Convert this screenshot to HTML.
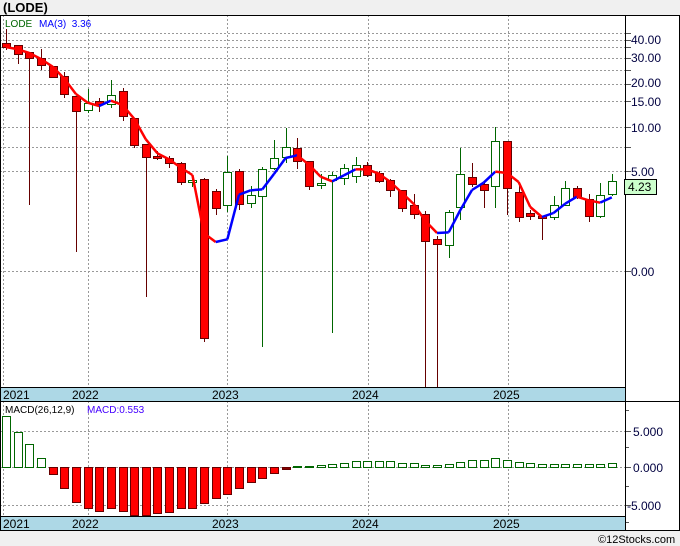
<!DOCTYPE html>
<html><head><meta charset="utf-8"><style>
body{margin:0;width:680px;height:546px;background:#f0f0f0;overflow:hidden;font-family:"Liberation Sans",sans-serif}
</style></head><body>
<svg id="s" width="680" height="546" xmlns="http://www.w3.org/2000/svg" style="position:absolute;left:0;top:0">
<rect x="0" y="15" width="680" height="516" fill="#fff"/>
<text x="3" y="12" font-size="13" font-weight="bold" fill="#000">(LODE)</text>
<g id="g"></g>
</svg>
<script>
var g=document.getElementById('g'),h='';
function L(x1,y1,x2,y2,c,w,d){h+='<line x1="'+x1+'" y1="'+y1+'" x2="'+x2+'" y2="'+y2+'" stroke="'+c+'" stroke-width="'+(w||1)+'"'+(d?' stroke-dasharray="2,2"':'')+'/>';}
function T(x,y,t,c,s){h+='<text x="'+x+'" y="'+y+'" font-size="'+(s||12)+'" fill="'+c+'">'+t+'</text>';}
[33,40,47,58,70,84,101,127,147,171,271].forEach(function(y){L(0,y+.5,625,y+.5,'#999',1,1);L(625,y+.5,631,y+.5,'#555');});
[3,88,227,368,508].forEach(function(x){L(x+.5,15,x+.5,387,'#999',1,1);L(x+.5,401,x+.5,516,'#999',1,1);});
[[39,'40.00'],[57,'30.00'],[82,'20.00'],[101,'15.00'],[127,'10.00'],[171,'5.00'],[271,'0.00']].forEach(function(a){T(631,a[0]+5,a[1],'#000040');});
[431,467,505].forEach(function(y){L(0,y+.5,625,y+.5,'#999',1,1);L(625,y+.5,631,y+.5,'#555');});
[[431,'5.000'],[467,'0.000'],[505,'-5.000']].forEach(function(a){T(a[1][0]=='-'?627:633,a[0]+5,a[1],'#000040');});
[410,447,486,522].forEach(function(y){L(625,y+.5,629,y+.5,'#555');});
var C=[[43,47,'r',29,50],[45,54,'r',45,64],[52,58,'r',52,205],[58,65,'r',49,70],[66,77,'r',66,78],[76,94,'r',72,98],[96,111,'r',96,252],[103,110,'g',89,113],[101,104,'r',98,112],[95,104,'g',80,108],[91,116,'r',88,121],[118,145,'r',118,148],[144,157,'r',144,297],[156,158,'r',151,160],[158,163,'r',156,168],[163,182,'r',162,185],[180,182,'g',175,187],[179,338,'r',178,342],[191,208,'r',189,215],[172,205,'g',156,212],[171,204,'r',169,210],[195,203,'g',186,208],[169,196,'g',167,347],[158,168,'g',140,170],[147,157,'g',128,163],[148,161,'r',138,169],[161,186,'r',161,190],[183,185,'g',174,189],[175,180,'g',172,333],[168,178,'g',164,185],[165,176,'g',157,183],[165,175,'r',162,177],[173,181,'r',171,183],[180,190,'r',179,197],[190,208,'r',190,212],[205,214,'r',194,219],[214,241,'r',211,387],[239,244,'r',236,387],[212,245,'g',210,258],[174,207,'g',148,220],[177,184,'r',163,187],[184,190,'r',182,208],[141,186,'g',127,208],[141,188,'r',141,215],[192,217,'r',183,222],[213,216,'r',210,220],[216,218,'r',216,240],[205,217,'g',196,220],[188,205,'g',181,206],[188,197,'r',186,199],[199,216,'r',194,222],[195,216,'g',183,218],[181,194,'g',174,196]];
var cl=[];
C.forEach(function(c,i){var x=6+i*11.65,cx=Math.round(x)+.5;
var col=c[2]=='r'?'#600':'#060';L(cx,c[3],cx,c[4],col);
var bh=Math.max(c[1]-c[0],2);
h+='<rect x="'+(Math.round(x)-3.5)+'" y="'+(c[0]+.5)+'" width="8" height="'+bh+'" fill="'+(c[2]=='r'?'#f00':'#fff')+'" stroke="'+col+'"/>';
cl.push(c[2]=='r'?c[1]:c[0]);});
for(var i=1;i<C.length;i++){
 var a=(cl[Math.max(0,i-3)]+cl[Math.max(0,i-2)]+cl[i-1])/3,b=(cl[Math.max(0,i-2)]+cl[i-1]+cl[i])/3;
 if(i<2){a=cl[0];}
 L(6+(i-1)*11.65,a,6+i*11.65,b,b<a?'#00f':'#f00',2.5);}
var M=[51,35,23,9,-7,-21,-35,-41,-44,-41,-44,-48,-48,-46,-45,-41,-41,-36,-31,-27,-21,-15,-11,-6,-2,1,1,2,3,4,6,6,6,6,4,4,2,2,3,5,7,7,9,7,5,4,3,3,3,3,3,3,4];
M.forEach(function(v,i){var x=Math.round(6+i*11.65)-3.5;
 if(v>0)h+='<rect x="'+x+'" y="'+(467.5-v)+'" width="8" height="'+v+'" fill="#fff" stroke="#060"/>';
 else h+='<rect x="'+x+'" y="467.5" width="8" height="'+(-v)+'" fill="'+(i==24?'#800':'#f00')+'" stroke="#600"/>';});
h+='<rect x="0" y="387" width="625" height="14" fill="#add8e6"/><rect x="0" y="516" width="625" height="15" fill="#add8e6"/>';
L(0,15.5,680,15.5,'#000');L(0,387.5,625,387.5,'#000');L(0,401.5,680,401.5,'#000');L(0,516.5,625,516.5,'#000');L(0,530.5,680,530.5,'#000');
L(625.5,15,625.5,531,'#000');L(679.5,15,679.5,531,'#000');L(0.5,15,0.5,531,'#000');
[[3,'2021'],[72,'2022'],[212,'2023'],[352,'2024'],[493,'2025']].forEach(function(a){T(a[0],399,a[1],'#000',12);T(a[0],528,a[1],'#000',12);});
T(5,27,'LODE','#060',10);T(39,27,'MA(3)&#160;&#160;3.36','#00f',10);
T(5,413,'MACD(26,12,9)','#000',10);T(87,413,'MACD:0.553','#40f',10);
h+='<rect x="624.5" y="179.5" width="32" height="15" fill="#ccffcc" stroke="#000"/>';T(628,191,'4.23','#000',12);
T(598,543,'©12Stocks.com','#000',11);
g.innerHTML=h;
</script>
</body></html>
